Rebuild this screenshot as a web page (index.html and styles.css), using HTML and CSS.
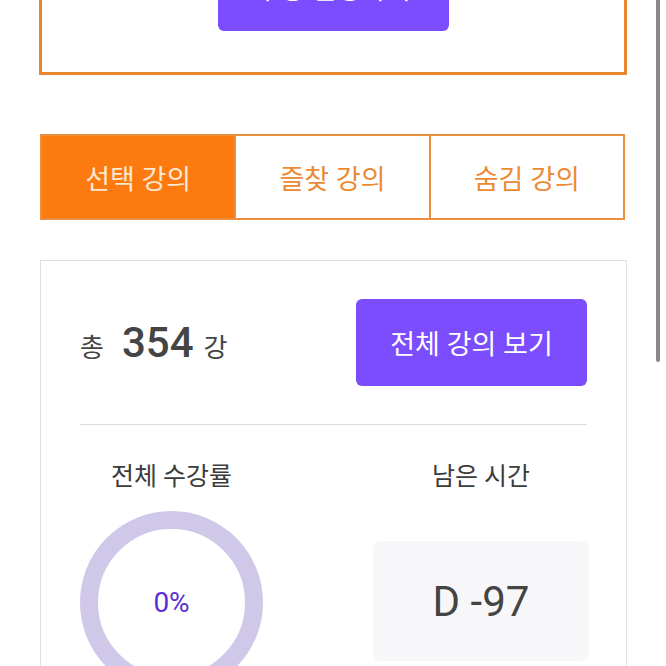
FILE: index.html
```html
<!DOCTYPE html>
<html lang="ko">
<head>
    <meta charset="UTF-8">
    <meta name="viewport" content="width=device-width, initial-scale=1.0">
    <title>내 강의실</title>
    <link rel="stylesheet" href="styles.css">
</head>
<body>
    <div class="page">
        <div class="notice-box">
            <button class="purple-btn">수강 신청하기</button>
        </div>

        <div class="tabs">
            <div class="tab active">선택 강의</div>
            <div class="tab">즐찾 강의</div>
            <div class="tab">숨김 강의</div>
        </div>

        <div class="card">
            <div class="card-top">
                <div class="total">
                    <span class="total-label">총</span>
                    <span class="total-num">354</span>
                    <span class="total-unit">강</span>
                </div>
                <button class="purple-btn">전체 강의 보기</button>
            </div>

            <div class="stats">
                <div class="stat stat-rate">
                    <div class="stat-title">전체 수강률</div>
                    <div class="donut">
                        <span class="donut-value">0%</span>
                    </div>
                </div>
                <div class="stat stat-time">
                    <div class="stat-title">남은 시간</div>
                    <div class="dday">D -97</div>
                </div>
            </div>
        </div>
    </div>

    <div class="scrollbar"></div>
</body>
</html>
```

FILE: styles.css
```css
body {
    margin: 0;
    background: #fff;
    font-family: Roboto, "Noto Sans CJK KR", sans-serif;
    color: #444;
    overflow: hidden;
}

.page {
    width: 588px;
    margin: -99px 0 0 39px;
}

.purple-btn {
    width: 231px;
    height: 87px;
    background: #7c4dff;
    color: #fff;
    border: none;
    border-radius: 6px;
    font-family: inherit;
    font-size: 27px;
    cursor: pointer;
}

.notice-box {
    border: 3px solid #e9862f;
    padding: 40px 0 41px;
    text-align: center;
}

.notice-box .purple-btn {
    display: block;
    margin: 0 auto;
    padding-bottom: 1px;
}

.tabs {
    display: flex;
    width: 585px;
    margin: 59px 0 0 1px;
    border: 2px solid #eb8f3e;
    box-sizing: border-box;
    height: 86px;
}

.tab {
    flex: 1;
    display: flex;
    align-items: center;
    justify-content: center;
    font-size: 27px;
    color: #ec8a33;
    border-left: 2px solid #eb8f3e;
}

.tab:first-child {
    border-left: none;
}

.tab.active {
    background: #fc7a10;
    color: #fde8d2;
}

.card {
    margin: 40px 0 0 1px;
    border: 1px solid #e0e0e0;
    padding: 38px 39px 0 39px;
    height: 500px;
}

.card-top {
    display: flex;
    align-items: center;
    justify-content: space-between;
    padding-bottom: 38px;
    border-bottom: 1px solid #dcdcdc;
}

.total {
    display: flex;
    align-items: baseline;
    gap: 8px;
}

.total-label,
.total-unit {
    font-size: 26px;
}

.total-num {
    font-size: 42px;
    font-weight: 500;
    margin: 0 2px 0 10px;
}

.stats {
    display: flex;
    justify-content: space-between;
    padding-top: 36px;
}

.stat {
    display: flex;
    flex-direction: column;
    align-items: center;
}

.stat-rate {
    width: 183px;
}

.stat-time {
    width: 216px;
    margin-right: -2px;
}

.stat-title {
    font-size: 25px;
    color: #3c3c3c;
    line-height: 32px;
}

.donut {
    margin-top: 18px;
    width: 183px;
    height: 183px;
    border: 18px solid #d0c8e9;
    border-radius: 50%;
    box-sizing: border-box;
    display: flex;
    align-items: center;
    justify-content: center;
}

.donut-value {
    font-size: 28px;
    color: #5a30d4;
}

.dday {
    margin-top: 48px;
    width: 100%;
    height: 120px;
    background: #f7f7f9;
    border-radius: 8px;
    display: flex;
    align-items: center;
    justify-content: center;
    font-size: 42px;
    color: #444;
}

.scrollbar {
    position: fixed;
    top: 0;
    left: 656px;
    width: 4px;
    height: 362px;
    background: #888;
    border-radius: 0 0 2px 2px;
}
```
